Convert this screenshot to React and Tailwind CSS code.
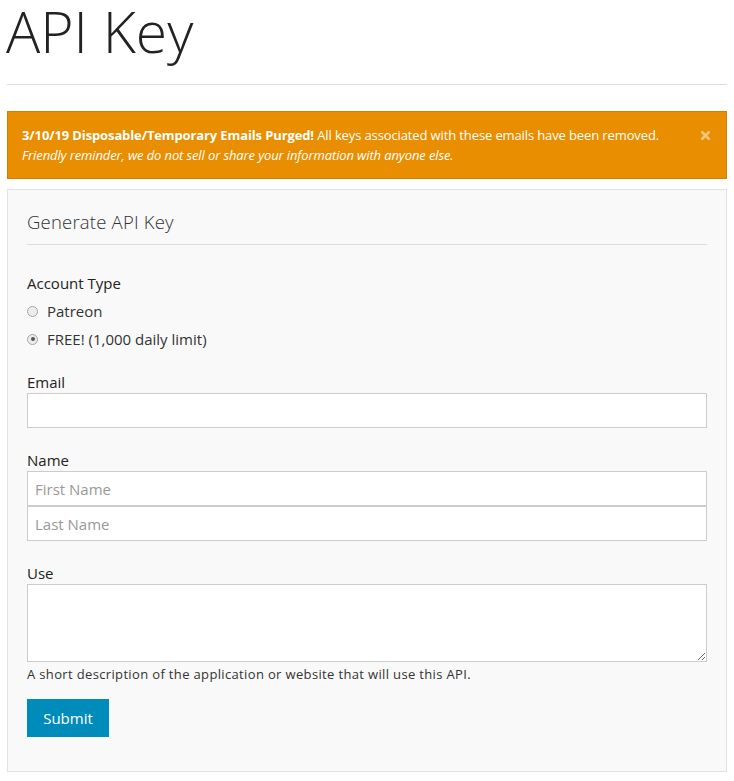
import { X } from 'lucide-react';

const Radio = ({ checked, label }) => (
    <label className="flex items-center h-5 gap-[9px] text-[15px] text-[#333]">
        <span className="w-[11px] h-[11px] rounded-full border border-[#a6a6a6] bg-[#ececec] flex items-center justify-center">
            {checked && <span className="w-[4px] h-[4px] rounded-full bg-[#555]" />}
        </span>
        {label}
    </label>
);

const Field = ({ label, children }) => (
    <div className="flex flex-col">
        <span className="text-[15px] leading-5 text-[#222]">{label}</span>
        {children}
    </div>
);

const inputClass = "h-[35px] w-full border border-[#ccc] bg-white px-[7px] text-[15px] text-[#333] placeholder:text-[#999] outline-none";

export default function App() {
    return (
        <div className="px-[7px] bg-white min-h-[781px]" style={{ fontFamily: '"Open Sans", "Liberation Sans", sans-serif' }}>
            <h1 className="text-[57px] leading-[62px] font-light text-[#222] -ml-[1px]">API Key</h1>
            <hr className="mt-[22px] border-0 border-t border-[#ddd]" />

            {/* Alert */}
            <div className="mt-[26px] flex items-start justify-between border border-[#cf8000] bg-[#e88e00] pl-[14px] pr-[14px] pt-[13px] pb-[13px] text-[13px] leading-5 tracking-[-0.12px] text-white">
                <div>
                    <p><b>3/10/19 Disposable/Temporary Emails Purged!</b> All keys associated with these emails have been removed.</p>
                    <p className="italic">Friendly reminder, we do not sell or share your information with anyone else.</p>
                </div>
                <X className="w-[13px] h-[13px] mt-[4px] text-[#f5c47a]" strokeWidth={5} />
            </div>

            {/* Panel */}
            <div className="mt-[10px] border border-[#e2e2e2] bg-[#f9f9f9] px-[19px] pt-[20px] pb-[34px]">
                <h4 className="text-[18.5px] leading-6 font-light tracking-[0.2px] text-[#333] pb-[10px] border-b border-[#ddd]">Generate API Key</h4>

                <div className="mt-[28px] flex flex-col gap-2">
                    <span className="text-[15px] leading-5 text-[#222]">Account Type</span>
                    <Radio label="Patreon" />
                    <Radio label="FREE! (1,000 daily limit)" checked />
                </div>

                <div className="mt-[23px] flex flex-col gap-[22px]">
                    <Field label="Email">
                        <input className={`mt-px ${inputClass}`} />
                    </Field>
                    <Field label="Name">
                        <input className={`mt-px ${inputClass}`} placeholder="First Name" />
                        <input className={inputClass} placeholder="Last Name" />
                    </Field>
                    <div className="flex flex-col">
                        <span className="text-[15px] leading-5 text-[#222]">Use</span>
                        <textarea className="mt-px h-[78px] w-full border border-[#ccc] bg-white px-[7px] py-1 text-[14px] outline-none" />
                        <span className="mt-[4px] text-[13px] leading-4 tracking-[0.35px] text-[#333]">A short description of the application or website that will use this API.</span>
                    </div>
                </div>

                <button className="mt-[17px] h-[38px] w-[82px] bg-[#008cba] text-[15px] text-white">Submit</button>
            </div>
        </div>
    );
}
